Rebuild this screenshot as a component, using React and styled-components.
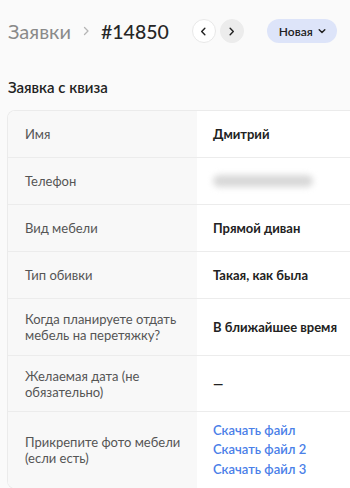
import React from "react";
import styled, { createGlobalStyle } from "styled-components";

const GlobalStyle = createGlobalStyle`
  body {
    margin: 0;
    background: #fafafa;
    font-family: Lato, "Noto Sans", sans-serif;
    color: #222;
  }
`;

const Page = styled.div`
  width: 350px;
  height: 488px;
  overflow: hidden;
  padding: 0 0 0 8px;
  box-sizing: border-box;
`;

const Header = styled.div`
  display: flex;
  align-items: center;
  height: 62px;
`;

const Crumb = styled.span`
  font-size: 20px;
  color: #8a8a8a;
`;

const Sep = styled.span`
  margin: 0 10px 0 10px;
  color: #b5b5b5;
  display: flex;
`;

const Title = styled.span`
  font-size: 19.5px;
  font-weight: 500;
  color: #262626;
`;

const NavGroup = styled.div`
  display: flex;
  gap: 4px;
  margin-left: 23px;
`;

const NavButton = styled.button`
  width: 24px;
  height: 24px;
  border-radius: 50%;
  border: 1px solid ${(p) => (p.$filled ? "#ececec" : "#e8e8e8")};
  background: ${(p) => (p.$filled ? "#ececec" : "#fff")};
  display: flex;
  align-items: center;
  justify-content: center;
  padding: 0;
  color: #222;
`;

const Status = styled.button`
  margin-left: 23px;
  height: 24px;
  padding: 0 11px 0 12px;
  border: none;
  border-radius: 12px;
  background: #dde4f9;
  font-family: inherit;
  font-size: 12px;
  font-weight: 600;
  color: #222;
  display: flex;
  align-items: center;
  gap: 5px;
`;

const SectionTitle = styled.h2`
  margin: 16px 0 14px;
  font-size: 15px;
  font-weight: 600;
  color: #222;
`;

const Card = styled.div`
  width: 420px;
  border: 1px solid #ebebeb;
  border-right: none;
  border-radius: 8px 0 0 8px;
  background: #fff;
  overflow: hidden;
  margin-left: -1px;
`;

const Row = styled.div`
  display: grid;
  grid-template-columns: 189px 1fr;
  min-height: ${(p) => p.$min || 46}px;
  & + & {
    border-top: 1px solid #ececec;
  }
`;

const Label = styled.div`
  background: #f8f8f8;
  padding: 8px 16px 8px 17px;
  display: flex;
  align-items: center;
  font-size: 13px;
  line-height: 16px;
  color: #555;
`;

const Value = styled.div`
  padding: 8px 16px;
  display: flex;
  flex-direction: column;
  justify-content: center;
  font-size: 13px;
  line-height: 16px;
  font-weight: 700;
  color: #222;
`;

const Blurred = styled.div`
  width: 100px;
  height: 12px;
  border-radius: 6px;
  background: #d8d8d8;
  filter: blur(3px);
`;

const FileLink = styled.a`
  color: #4a80e8;
  font-weight: 600;
  text-decoration: none;
  line-height: 19.5px;
`;

const Chevron = ({ dir = "right", size = 10, color = "currentColor", w = 1.6 }) => (
  <svg width={size} height={size} viewBox="0 0 10 10" fill="none">
    <path
      d={dir === "right" ? "M3.5 1.5 7 5 3.5 8.5" : dir === "left" ? "M6.5 1.5 3 5l3.5 3.5" : "M1.5 3.5 5 7l3.5-3.5"}
      stroke={color}
      strokeWidth={w}
      strokeLinecap="round"
      strokeLinejoin="round"
    />
  </svg>
);

const rows = [
  { label: "Имя", value: "Дмитрий" },
  { label: "Телефон", blur: true },
  { label: "Вид мебели", value: "Прямой диван" },
  { label: "Тип обивки", value: "Такая, как была" },
  { label: "Когда планируете отдать мебель на перетяжку?", value: "В ближайшее время", min: 56 },
  { label: "Желаемая дата (не обязательно)", value: "—", min: 55 },
];

export default function App() {
  return (
    <Page>
      <GlobalStyle />
      <Header>
        <Crumb>Заявки</Crumb>
        <Sep>
          <Chevron size={10} w={1.3} />
        </Sep>
        <Title>#14850</Title>
        <NavGroup>
          <NavButton>
            <Chevron dir="left" size={9} />
          </NavButton>
          <NavButton $filled>
            <Chevron size={9} />
          </NavButton>
        </NavGroup>
        <Status>
          Новая
          <Chevron dir="down" size={8} w={1.8} />
        </Status>
      </Header>
      <SectionTitle>Заявка с квиза</SectionTitle>
      <Card>
        {rows.map((r) => (
          <Row key={r.label} $min={r.min}>
            <Label>{r.label}</Label>
            <Value>{r.blur ? <Blurred /> : r.value}</Value>
          </Row>
        ))}
        <Row $min={76}>
          <Label>Прикрепите фото мебели (если есть)</Label>
          <Value>
            <FileLink href="#">Скачать файл</FileLink>
            <FileLink href="#">Скачать файл 2</FileLink>
            <FileLink href="#">Скачать файл 3</FileLink>
          </Value>
        </Row>
      </Card>
    </Page>
  );
}
